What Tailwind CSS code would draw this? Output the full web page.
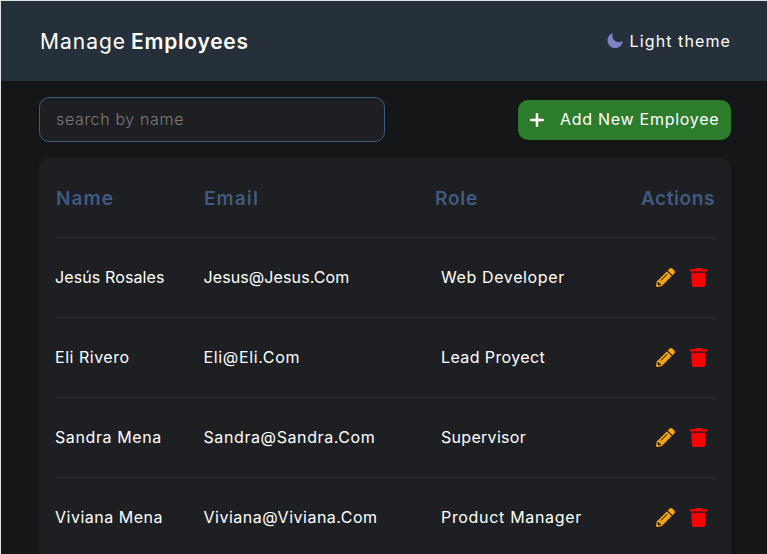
<!DOCTYPE html>
<html lang="en">
<head>
<meta charset="utf-8">
<title>Manage Employees</title>
<script src="https://cdn.jsdelivr.net/npm/@tailwindcss/browser@4"></script>
</head>
<body class="h-[554px] overflow-hidden bg-[#151618] font-['Inter',sans-serif] text-base text-white">
<svg class="hidden">
  <symbol id="pencil" viewBox="0 0 512 512"><path d="M497.9 142.1l-46.1 46.1c-4.7 4.7-12.3 4.7-17 0l-111-111c-4.7-4.7-4.7-12.3 0-17l46.1-46.1c18.7-18.7 49.1-18.7 67.9 0l60.1 60.1c18.8 18.7 18.8 49.1 0 67.9zM284.2 99.8L21.6 362.4.4 483.9c-2.9 16.4 11.4 30.6 27.8 27.8l121.5-21.3 262.6-262.6c4.7-4.7 4.7-12.3 0-17l-111-111c-4.8-4.7-12.4-4.7-17.1 0zM124.1 339.9c-5.5-5.5-5.5-14.3 0-19.8l154-154c5.5-5.5 14.3-5.5 19.8 0s5.5 14.3 0 19.8l-154 154c-5.5 5.5-14.3 5.5-19.8 0zM88 424h48v36.3l-64.5 11.3-31.1-31.1L51.7 376H88v48z"/></symbol>
  <symbol id="trash" viewBox="0 0 448 512" preserveAspectRatio="none"><path d="M432 32H312l-9.4-18.7A24 24 0 0 0 281.1 0H166.8a23.72 23.72 0 0 0-21.4 13.3L136 32H16A16 16 0 0 0 0 48v32a16 16 0 0 0 16 16h416a16 16 0 0 0 16-16V48a16 16 0 0 0-16-16zM53.2 467a48 48 0 0 0 47.9 45h245.8a48 48 0 0 0 47.9-45L416 128H32z"/></symbol>
</svg>
<div class="h-full overflow-hidden border-t border-l border-[#dfe3e3]">
  <header class="flex h-20 items-center justify-between bg-[#25303b] pr-9 pl-[39px]">
    <h1 class="flex gap-[5px] pt-0.5 text-[21px] leading-8"><span class="tracking-[1px]">Manage</span><span class="font-semibold tracking-[.75px]">Employees</span></h1>
    <div class="flex items-center gap-[7px]">
      <svg class="size-4" viewBox="1.5 1.5 17.5 17.5" fill="#7b83c4"><path d="M7.455 2.004a.75.75 0 0 1 .26.77 7 7 0 0 0 9.958 7.967.75.75 0 0 1 1.067.853A8.5 8.5 0 1 1 6.647 1.921a.75.75 0 0 1 .808.083Z"/></svg>
      <span class="tracking-[1.1px]">Light theme</span>
    </div>
  </header>
  <main class="pr-9 pl-[38px]">
    <div class="flex items-center justify-between pt-4 pb-4">
      <input placeholder="search by name" class="h-[45px] w-[346px] rounded-[10px] border border-[#3f5b83] bg-[#1e1f23] px-4 pb-0.5 font-light tracking-[.65px] placeholder:text-[#7c7c7c]">
      <button class="flex h-10 w-[213px] items-center rounded-[10px] bg-[#2c7c2c] pl-3">
        <svg class="mr-4 size-[14px]" viewBox="0 0 14 14" fill="none" stroke="#fff" stroke-width="2.6" stroke-linecap="round"><path d="M7 1.3v11.4M1.3 7h11.4"/></svg>
        <span class="pb-0.5 whitespace-nowrap tracking-[.72px]">Add New Employee</span>
      </button>
    </div>
    <section class="h-[396px] overflow-hidden rounded-t-[10px] bg-[#1e1f23] px-4">
      <div class="grid h-20 grid-cols-[148px_231px_1fr_auto] items-center border-b border-[#292a2f] pt-[3px] pl-px text-[19px] font-semibold text-[#405b82]">
        <span class="tracking-[1.1px]">Name</span><span class="tracking-[1.1px]">Email</span><span class="tracking-[.8px]">Role</span><span class="tracking-[.6px]">Actions</span>
      </div>
      <div class="grid h-20 grid-cols-[148.5px_237.5px_1fr_auto] items-center border-b border-[#292a2f] pb-0.5">
        <span class="tracking-[.12px]">Jesús Rosales</span><span class="tracking-[.1px]">Jesus@Jesus.Com</span><span class="tracking-[.62px]">Web Developer</span>
        <div class="flex gap-[15px] pt-px pr-2"><svg class="size-[19px] fill-[#ffa50a]"><use href="#pencil"/></svg><svg class="h-[19px] w-[17px] fill-[#ff0000]"><use href="#trash"/></svg></div>
      </div>
      <div class="grid h-20 grid-cols-[148.5px_237.5px_1fr_auto] items-center border-b border-[#292a2f] pb-0.5">
        <span class="tracking-[.52px]">Eli Rivero</span><span class="tracking-[.66px]">Eli@Eli.Com</span><span class="tracking-[.4px]">Lead Proyect</span>
        <div class="flex gap-[15px] pt-px pr-2"><svg class="size-[19px] fill-[#ffa50a]"><use href="#pencil"/></svg><svg class="h-[19px] w-[17px] fill-[#ff0000]"><use href="#trash"/></svg></div>
      </div>
      <div class="grid h-20 grid-cols-[148.5px_237.5px_1fr_auto] items-center border-b border-[#292a2f] pb-0.5">
        <span class="tracking-[.6px]">Sandra Mena</span><span class="tracking-[.6px]">Sandra@Sandra.Com</span><span class="tracking-[.3px]">Supervisor</span>
        <div class="flex gap-[15px] pt-px pr-2"><svg class="size-[19px] fill-[#ffa50a]"><use href="#pencil"/></svg><svg class="h-[19px] w-[17px] fill-[#ff0000]"><use href="#trash"/></svg></div>
      </div>
      <div class="grid h-20 grid-cols-[148.5px_237.5px_1fr_auto] items-center border-b border-[#292a2f] pb-0.5">
        <span class="tracking-[.5px]">Viviana Mena</span><span class="tracking-[.5px]">Viviana@Viviana.Com</span><span class="tracking-[.68px]">Product Manager</span>
        <div class="flex gap-[15px] pt-px pr-2"><svg class="size-[19px] fill-[#ffa50a]"><use href="#pencil"/></svg><svg class="h-[19px] w-[17px] fill-[#ff0000]"><use href="#trash"/></svg></div>
      </div>
    </section>
  </main>
</div>
</body>
</html>
